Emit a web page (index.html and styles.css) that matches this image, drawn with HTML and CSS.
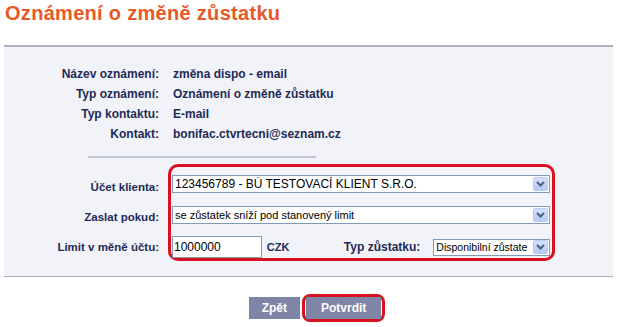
FILE: index.html
```html
<!DOCTYPE html>
<html lang="cs">
<head>
  <meta charset="UTF-8" />
  <title>Oznámení o změně zůstatku</title>
  <link rel="stylesheet" href="styles.css">
</head>
<body>

  <h1 class="page-title">Oznámení o změně zůstatku</h1>

  <!-- Panel -->
  <div class="panel">
    <div class="info">
      <span class="info-label">Název oznámení:</span>
      <span class="info-value">změna dispo - email</span>
      <span class="info-label">Typ oznámení:</span>
      <span class="info-value">Oznámení o změně zůstatku</span>
      <span class="info-label">Typ kontaktu:</span>
      <span class="info-value">E-mail</span>
      <span class="info-label">Kontakt:</span>
      <span class="info-value">bonifac.ctvrtecni@seznam.cz</span>
    </div>

    <div class="separator"></div>

    <div class="form">
      <div class="form-labels">
        <label>Účet klienta:</label>
        <label>Zaslat pokud:</label>
        <label>Limit v měně účtu:</label>
      </div>

      <div class="highlight">
        <div class="form-row">
          <div class="select wide">
            <span class="select-text">123456789 - BÚ TESTOVACÍ KLIENT S.R.O.</span>
            <span class="select-arrow"><svg width="9" height="6" viewBox="0 0 9 6"><path d="M1 1 L4.5 4.5 L8 1" fill="none" stroke="#4d6185" stroke-width="2"/></svg></span>
          </div>
        </div>
        <div class="form-row">
          <div class="select wide small">
            <span class="select-text">se zůstatek sníží pod stanovený limit</span>
            <span class="select-arrow"><svg width="9" height="6" viewBox="0 0 9 6"><path d="M1 1 L4.5 4.5 L8 1" fill="none" stroke="#4d6185" stroke-width="2"/></svg></span>
          </div>
        </div>
        <div class="form-row last">
          <div class="text-input">1000000</div>
          <span class="currency">CZK</span>
          <label class="inline-label">Typ zůstatku:</label>
          <div class="select narrow">
            <span class="select-text">Disponibilní zůstate</span>
            <span class="select-arrow"><svg width="9" height="6" viewBox="0 0 9 6"><path d="M1 1 L4.5 4.5 L8 1" fill="none" stroke="#4d6185" stroke-width="2"/></svg></span>
          </div>
        </div>
      </div>
    </div>
  </div>

  <!-- Buttons -->
  <div class="buttons">
    <button class="btn">Zpět</button>
    <span class="btn-ring"><button class="btn">Potvrdit</button></span>
  </div>

</body>
</html>
```

FILE: styles.css
```css
* {
  box-sizing: border-box;
  margin: 0;
  padding: 0;
}

body {
  font-family: 'Liberation Sans', Arial, sans-serif;
  background: #fff;
  color: #1e2a57;
  width: 618px;
  height: 327px;
  overflow: hidden;
}

.page-title {
  font-size: 20px;
  font-weight: bold;
  color: #e75a27;
  padding: 2px 0 0 5px;
  height: 45px;
  letter-spacing: 0.3px;
}

/* Panel */
.panel {
  margin: 0 5px 0 4px;
  background: #f2f3f8;
  border-top: 2px solid #aeb0bb;
  border-bottom: 1px solid #a9adbd;
  padding: 17px 0 14px;
  height: 232px;
}

.info {
  display: grid;
  grid-template-columns: 155px 1fr;
  column-gap: 14px;
  grid-auto-rows: 20px;
  align-items: center;
  font-size: 12px;
  font-weight: bold;
}

.info-label {
  text-align: right;
}

.separator {
  margin: 12px 0 0 84px;
  width: 228px;
  height: 2px;
  background: #c3c6d2;
}

/* Form */
.form {
  display: flex;
  margin-top: 6px;
}

.form-labels {
  width: 155px;
  display: flex;
  flex-direction: column;
  padding-top: 14px;
  gap: 12px;
  font-size: 11.5px;
  font-weight: bold;
  text-align: right;
}

.form-labels label {
  height: 18px;
  line-height: 18px;
}

.highlight {
  margin-left: 9px;
  width: 387px;
  height: 97px;
  border: 3px solid #d8101f;
  border-radius: 10px;
  padding: 8px 2px 0 1px;
}

.form-row {
  display: flex;
  align-items: center;
  height: 18px;
  margin-bottom: 13px;
}

.form-row.last {
  margin-top: -1px;
  height: 22px;
}

.select {
  display: flex;
  align-items: center;
  height: 18px;
  background: #fff;
  border: 1px solid #7f9db9;
  font-size: 12px;
  color: #000;
  overflow: hidden;
}

.select.wide {
  width: 378px;
}

.select.small {
  font-size: 11px;
}

.select.narrow {
  width: 117px;
  height: 17px;
  margin-left: 13px;
  font-size: 10.5px;
}

.select-text {
  flex-grow: 1;
  padding-left: 2px;
  white-space: nowrap;
  overflow: hidden;
}

.select-arrow {
  width: 15px;
  height: 14px;
  margin-right: 1px;
  display: flex;
  align-items: center;
  justify-content: center;
  border-radius: 2px;
  background: linear-gradient(#d6e2fc, #b3c8f5);
  border: 1px solid #b9cbf3;
  flex-shrink: 0;
}

.text-input {
  width: 90px;
  height: 22px;
  background: #fff;
  border: 1px solid #7f9db9;
  font-size: 12px;
  color: #000;
  padding: 3px 0 0 1px;
}

.currency {
  font-size: 11px;
  font-weight: bold;
  margin-left: 5px;
  width: 60px;
}

.inline-label {
  font-size: 12px;
  font-weight: bold;
  width: 94px;
  text-align: right;
}

/* Buttons */
.buttons {
  display: flex;
  justify-content: center;
  align-items: center;
  gap: 2px;
  padding: 17px 0 0 16px;
}

.btn {
  font-family: 'Liberation Sans', Arial, sans-serif;
  background: #7e85a6;
  color: #fff;
  font-weight: bold;
  font-size: 12px;
  border: none;
  height: 22px;
  padding: 0 13px;
}

.btn-ring {
  display: inline-flex;
  border: 3px solid #d8101f;
  border-radius: 8px;
  padding: 0 1px;
}

.btn-ring .btn {
  padding: 0 15px;
}
```
